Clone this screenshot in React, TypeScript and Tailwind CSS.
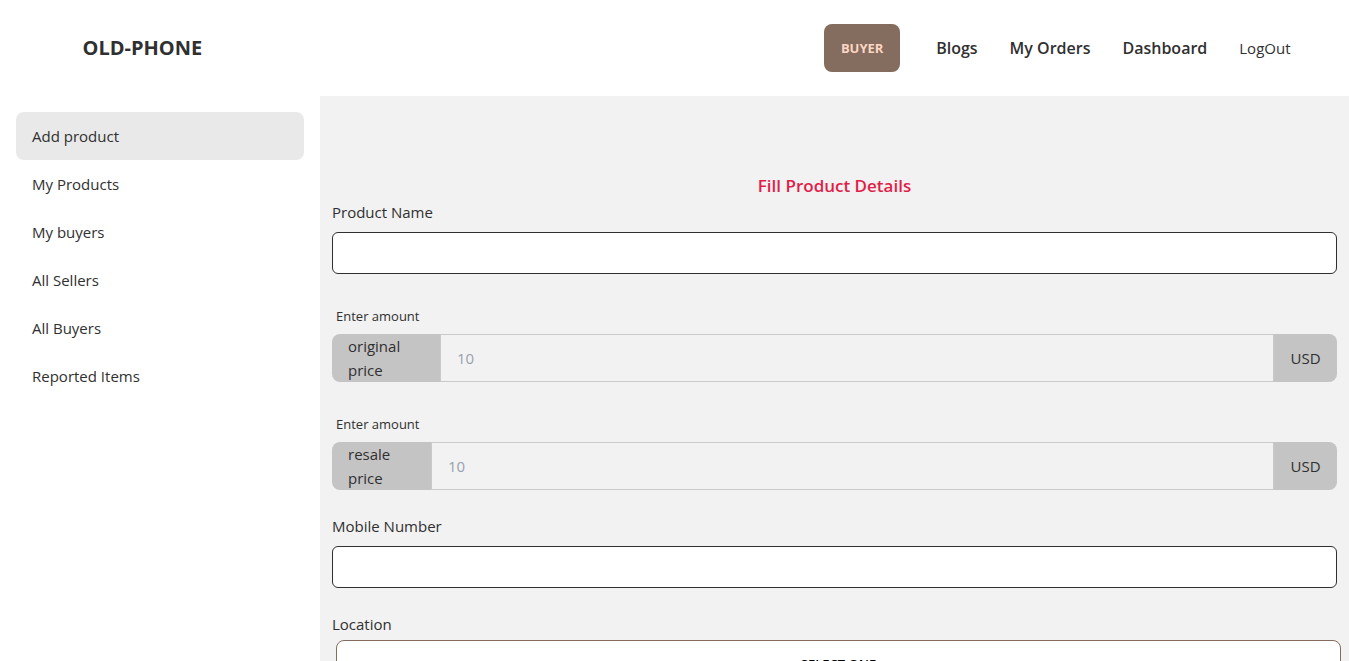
const sidebarLinks = ["Add product", "My Products", "My buyers", "All Sellers", "All Buyers", "Reported Items"];
const navLinks = ["Blogs", "My Orders", "Dashboard"];

function Header() {
  return (
    <header className="bg-white">
      <div className="mx-auto flex h-24 max-w-7xl items-center justify-between pr-6 pl-12">
        <a href="#home" className="text-xl font-bold">OLD-PHONE</a>
        <nav className="flex items-center gap-8">
          <button type="button" className="mr-1 flex h-12 w-19 items-center justify-center rounded-lg bg-[#846c5e] text-[13px] font-bold text-[#fbd6c5]">
            BUYER
          </button>
          {navLinks.map((name) => (
            <a key={name} href={`#${name}`} className="text-base font-semibold">{name}</a>
          ))}
          <button type="button">LogOut</button>
        </nav>
      </div>
    </header>
  );
}

function Sidebar() {
  return (
    <aside className="w-80 shrink-0 bg-white p-4">
      <ul>
        {sidebarLinks.map((name, index) => (
          <li key={name}>
            <a
              href={`#${name}`}
              className={
                index === 0
                  ? "flex h-12 items-center rounded-lg bg-[#e9e9e9] px-4"
                  : "flex h-12 items-center rounded-lg px-4"
              }
            >
              {name}
            </a>
          </li>
        ))}
      </ul>
    </aside>
  );
}

function TextField({ id, label, type }: { id: string; label: string; type: string }) {
  return (
    <div>
      <label htmlFor={id} className="mb-2 block leading-6">{label}</label>
      <input id={id} type={type} className="block h-[42px] w-full rounded-md border border-[#303030] bg-white px-3" />
    </div>
  );
}

function PriceField({ id, label, addonClass }: { id: string; label: string; addonClass: string }) {
  return (
    <div>
      <label htmlFor={id} className="block px-1 py-2 text-[13px] leading-5">Enter amount</label>
      <div className="flex h-12 overflow-hidden rounded-lg">
        <label htmlFor={id} className={addonClass}>{label}</label>
        <input
          id={id}
          type="text"
          placeholder="10"
          className="min-w-0 flex-1 border border-[#c9c9c9] bg-transparent px-4 placeholder:text-gray-400"
        />
        <span className="flex w-[63px] shrink-0 items-center justify-center bg-[#c4c4c4]">USD</span>
      </div>
    </div>
  );
}

export default function App() {
  return (
    <div className="flex min-h-screen flex-col overflow-x-hidden bg-white font-['Open_Sans','Noto_Sans',sans-serif] text-[15px] leading-6 text-[#303030]">
      <Header />
      <div className="flex flex-1">
        <Sidebar />
        <main className="min-w-0 flex-1 bg-[#f2f2f2] px-3 pt-19 pb-6">
          <h1 className="text-center text-[17px] leading-7 font-semibold text-[#e11d48]">Fill Product Details</h1>
          <form className="flex flex-col gap-6">
            <TextField id="product-name" label="Product Name" type="text" />
            <PriceField
              id="original-price"
              label="original price"
              addonClass="flex w-[108px] shrink-0 items-center bg-[#c4c4c4] px-4"
            />
            <PriceField
              id="resale-price"
              label="resale price"
              addonClass="flex w-[99px] shrink-0 items-center bg-[#c4c4c4] px-4"
            />
            <TextField id="mobile-number" label="Mobile Number" type="tel" />
            <div>
              <label htmlFor="location" className="block leading-6">Location</label>
              <select
                id="location"
                className="m-1 block h-12 w-full appearance-none rounded-lg border border-[#846c5e] bg-white text-center text-[13px] font-semibold text-black [text-align-last:center]"
              >
                <option>SELECT ONE</option>
              </select>
            </div>
          </form>
        </main>
      </div>
    </div>
  );
}
